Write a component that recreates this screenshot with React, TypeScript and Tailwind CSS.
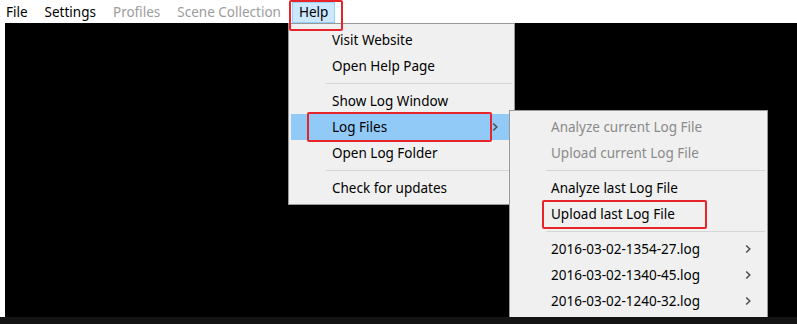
import React from "react";

const font = { fontFamily: '"Noto Sans", "Open Sans", sans-serif' };

function Chevron({ className = "" }: { className?: string }) {
  return (
    <svg width="6" height="10" viewBox="0 0 6 10" className={className}>
      <polyline points="1.2,1.5 4.8,5 1.2,8.5" fill="none" stroke="#4d4d4d" strokeWidth="1.5" />
    </svg>
  );
}

function Item({
  label,
  disabled = false,
  arrow = false,
  active = false,
  indent = "pl-[41px]",
}: {
  label: string;
  disabled?: boolean;
  arrow?: boolean;
  active?: boolean;
  indent?: string;
}) {
  return (
    <div
      className={`relative mx-[2px] flex h-[26px] items-center ${indent} pr-[14px] ${
        active ? "bg-[#91c9f7]" : ""
      }`}
    >
      <span className={`flex-1 whitespace-nowrap pt-[2px] ${disabled ? "text-[#8a8a8a]" : "text-black"}`}>{label}</span>
      {arrow && <Chevron />}
    </div>
  );
}

function Sep({ left }: { left: string }) {
  return (
    <div className={`flex h-[9px] items-center ${left} pr-[2px]`}>
      <div className="h-px w-full bg-[#d5d5d5]" />
    </div>
  );
}

export default function App() {
  return (
    <div className="relative h-[324px] w-[797px] overflow-hidden bg-white text-[13.5px] leading-none" style={font}>
      {/* menu bar */}
      <div className="flex h-[23px] items-center bg-white pt-[2px]">
        <span className="ml-[6px] text-black">File</span>
        <span className="ml-[17px] text-black">Settings</span>
        <span className="ml-[17px] text-[#9c9c9c]">Profiles</span>
        <span className="ml-[17px] text-[#9c9c9c]">Scene Collection</span>
        <span className="ml-[11px] flex h-[21px] items-center border border-[#99d1ff] bg-[#cce8ff] px-[6px] text-black">
          Help
        </span>
      </div>
      {/* body */}
      <div className="flex h-[294px]">
        <div className="w-[5px] bg-white" />
        <div className="flex-1 bg-black" />
      </div>
      <div className="h-[7px] bg-[#141414]" />

      {/* Help menu */}
      <div className="absolute left-[288px] top-[23px] w-[227px] border border-[#999999] bg-[#f0f0f0] py-[3px] shadow-[2px_2px_3px_rgba(0,0,0,0.25)]">
        <Item label="Visit Website" />
        <Item label="Open Help Page" />
        <Sep left="pl-[37px]" />
        <Item label="Show Log Window" />
        <Item label="Log Files" arrow active />
        <Item label="Open Log Folder" />
        <Sep left="pl-[37px]" />
        <Item label="Check for updates" />
      </div>

      {/* Log Files submenu */}
      <div className="absolute left-[509px] top-[110px] w-[259px] border border-[#999999] bg-[#f0f0f0] py-[3px]">
        <Item label="Analyze current Log File" disabled indent="pl-[39px]" />
        <Item label="Upload current Log File" disabled indent="pl-[39px]" />
        <Sep left="pl-[36px]" />
        <Item label="Analyze last Log File" indent="pl-[39px]" />
        <Item label="Upload last Log File" indent="pl-[39px]" />
        <Sep left="pl-[36px]" />
        <Item label="2016-03-02-1354-27.log" arrow indent="pl-[39px]" />
        <Item label="2016-03-02-1340-45.log" arrow indent="pl-[39px]" />
        <Item label="2016-03-02-1240-32.log" arrow indent="pl-[39px]" />
      </div>
      <div className="absolute left-0 top-[317px] h-[7px] w-full bg-[#141414]" />

      {/* red highlight boxes */}
      <div className="absolute left-[289px] top-0 h-[31px] w-[54px] rounded-[2px] border-2 border-[#e8242b]" />
      <div className="absolute left-[307px] top-[112px] h-[30px] w-[185px] rounded-[2px] border-2 border-[#e8242b]" />
      <div className="absolute left-[542px] top-[200px] h-[29px] w-[165px] rounded-[2px] border-2 border-[#e8242b]" />
    </div>
  );
}
